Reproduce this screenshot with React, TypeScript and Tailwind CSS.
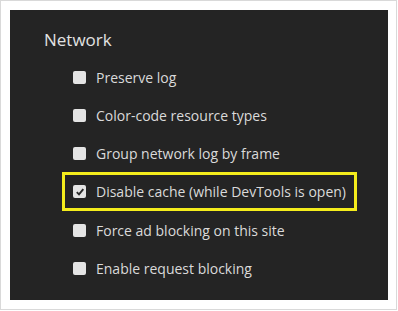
const items = [
  { label: 'Preserve log', checked: false },
  { label: 'Color-code resource types', checked: false },
  { label: 'Group network log by frame', checked: false },
  { label: 'Disable cache (while DevTools is open)', checked: true, highlight: true },
  { label: 'Force ad blocking on this site', checked: false },
  { label: 'Enable request blocking', checked: false },
];

function Box({ checked }: { checked: boolean }) {
  return (
    <span className="flex h-[13px] w-[13px] shrink-0 items-center justify-center rounded-[2px] bg-[#e4e4e4]">
      {checked && (
        <svg width="10" height="10" viewBox="0 0 10 10">
          <path d="M1.8 5.2 L4 7.4 L8.3 2.2" fill="none" stroke="#2a2a2a" strokeWidth="1.9" />
        </svg>
      )}
    </span>
  );
}

export default function App() {
  return (
    <div className="h-[311px] w-[398px] bg-white" style={{ fontFamily: '"Open Sans", sans-serif' }}>
      <div className="h-[310px] w-[397px] border border-[#d9d9d9] pl-[9px] pt-[9px]">
        <div className="h-[290px] w-[378px] bg-[#242424] pl-[34px] pt-[19px]">
          <h2 className="text-[17px] leading-[22px] text-[#e2e2e2]">Network</h2>
          <div className="mt-[7px] flex flex-col">
            {items.map((it) =>
              it.highlight ? (
                <div key={it.label} className="ml-[18px] flex h-[39px] w-[295px] items-center gap-[10px] border-[3px] border-[#f4ec1c] pl-[8px]">
                  <Box checked={it.checked} />
                  <span className="text-[14px] text-[#dadada]">{it.label}</span>
                </div>
              ) : (
                <div key={it.label} className="flex h-[38px] items-center gap-[10px] pl-[29px]">
                  <Box checked={it.checked} />
                  <span className="text-[14px] text-[#dadada]">{it.label}</span>
                </div>
              )
            )}
          </div>
        </div>
      </div>
    </div>
  );
}
